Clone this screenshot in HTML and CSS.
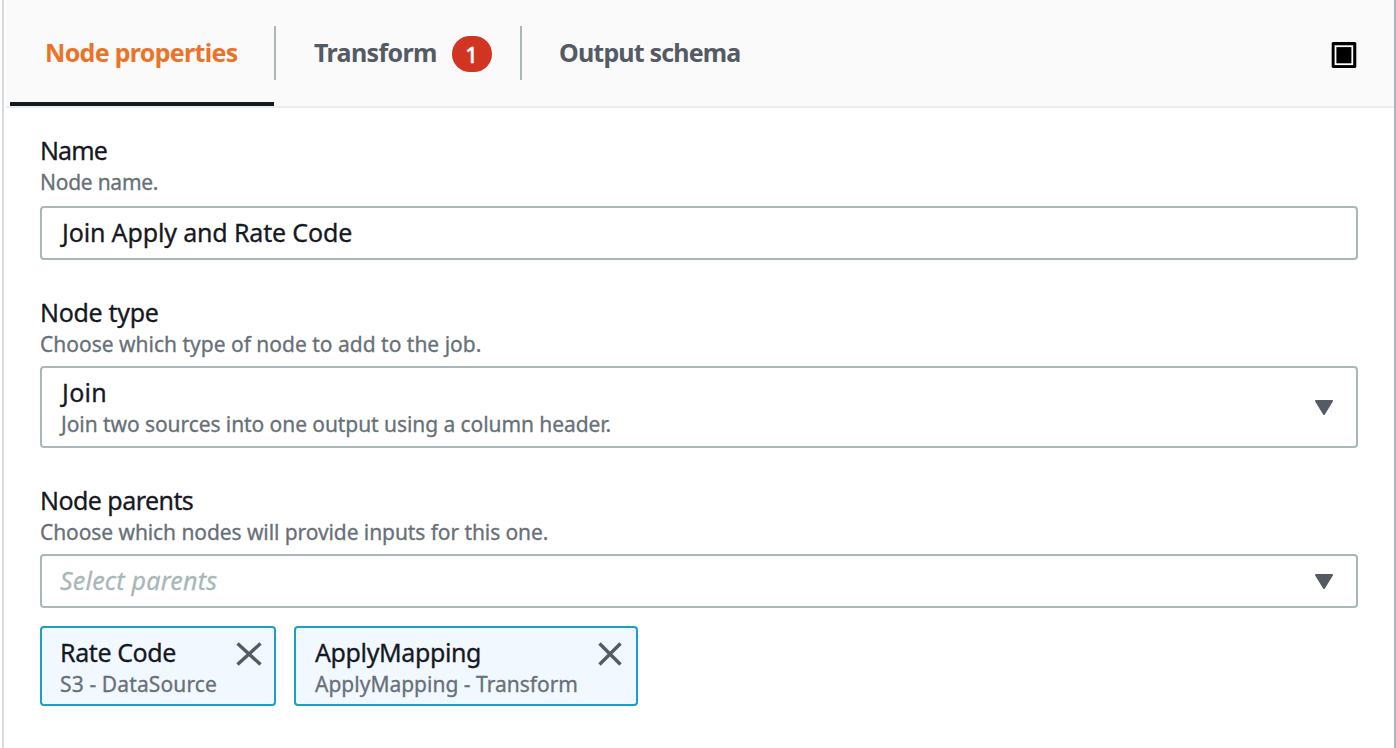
FILE: index.html
```html
<!DOCTYPE html>
<html lang="en">
<head>
<meta charset="utf-8">
<title>Node properties</title>
<link rel="stylesheet" href="styles.css">
</head>
<body>
<main class="panel">
  <header class="tabs">
    <div class="tab tab-active"><span class="t-props">Node properties</span></div>
    <div class="tab tab-transform"><span class="t-transform">Transform</span><span class="badge">1</span></div>
    <div class="tab tab-output"><span class="t-output">Output schema</span></div>
    <svg class="expand" width="26" height="28" viewBox="0 0 26 28"><rect x=".7" y="1" width="24.6" height="26" rx="1.5" fill="#000"/><rect x="4.5" y="5.2" width="16.8" height="18" fill="none" stroke="#fff" stroke-width="1.8"/></svg>
  </header>
  <section class="form">
    <div class="field">
      <div class="label"><span class="t-name">Name</span></div>
      <div class="hint"><span class="t-nodename">Node name.</span></div>
      <div class="control"><span class="t-join-apply">Join Apply and Rate Code</span></div>
    </div>
    <div class="field">
      <div class="label"><span class="t-nodetype">Node type</span></div>
      <div class="hint"><span class="t-choose-type">Choose which type of node to add to the job.</span></div>
      <div class="control control-tall">
        <div>
          <div class="option"><span class="t-join">Join</span></div>
          <div class="option-hint"><span class="t-join-two">Join two sources into one output using a column header.</span></div>
        </div>
        <svg class="caret" width="20" height="18" viewBox="0 0 20 18"><path d="M2 3h16L10 16z"/></svg>
      </div>
    </div>
    <div class="field">
      <div class="label"><span class="t-parents">Node parents</span></div>
      <div class="hint"><span class="t-choose-nodes">Choose which nodes will provide inputs for this one.</span></div>
      <div class="control control-parents"><span class="placeholder t-select">Select parents</span>
        <svg class="caret" width="20" height="18" viewBox="0 0 20 18"><path d="M2 3h16L10 16z"/></svg>
      </div>
    </div>
    <div class="tokens">
      <div class="token token-rate">
        <div>
          <div class="option"><span class="t-rate">Rate Code</span></div>
          <div class="option-hint"><span class="t-s3">S3 - DataSource</span></div>
        </div>
        <svg class="close" width="26" height="24" viewBox="0 0 26 24"><path d="M1.5 1.5l23 21M24.5 1.5l-23 21"/></svg>
      </div>
      <div class="token token-apply">
        <div>
          <div class="option"><span class="t-apply">ApplyMapping</span></div>
          <div class="option-hint"><span class="t-apply-tr">ApplyMapping - Transform</span></div>
        </div>
        <svg class="close" width="24" height="24" viewBox="0 0 24 24"><path d="M1.5 1.5l21 21M22.5 1.5l-21 21"/></svg>
      </div>
    </div>
  </section>
</main>
</body>
</html>
```
FILE: styles.css
```css
* { box-sizing: border-box; }
body { margin: 0; background: #fff; font-family: "Noto Sans", "Open Sans", sans-serif; color: #16191f; overflow: hidden; }
span { white-space: nowrap; }
.panel { height: 748px; margin-left: 2px; border-left: 2px solid #d5dbdb; border-right: 2px solid #aab7b8; padding-left: 2px; }
.tabs { display: flex; height: 108px; background: #fafafa; border-bottom: 2px solid #eaeded; padding-left: 4px; font-size: 25px; font-weight: 700; line-height: 34px; color: #545b64; }
.tab { position: relative; display: flex; height: 106px; padding-top: 35px; }
.tab-active { width: 264px; padding-left: 35px; border-bottom: 4px solid #16191f; color: #eb7329; }
.tab-transform { width: 247px; padding-left: 40px; }
.tab-output { padding-left: 38px; }
.tab-transform::before, .tab-output::before { content: ""; position: absolute; left: 0; top: 26px; width: 2px; height: 54px; background: #aab7b8; }
.tab-output::before { left: -1px; }
.badge { width: 40px; height: 36px; border-radius: 18px; background: #d13420; color: #fff; font-size: 22px; line-height: 36px; font-weight: 500; text-align: center; margin: 1px 0 0 15px; -webkit-text-stroke: .4px; }
.expand { margin: 41px 37px 0 auto; }
.form { padding: 26px 36px 0 34px; -webkit-text-stroke: .3px; }
.field { margin-bottom: 36px; }
.label, .option { font-size: 25px; line-height: 32px; padding-bottom: 2px; }
.hint, .option-hint { font-size: 21px; line-height: 28px; color: #687078; }
.control { display: flex; align-items: center; justify-content: space-between; margin-top: 10px; height: 54px; border: 2px solid #aab7b8; border-radius: 4px; padding: 0 22px 0 18px; font-size: 25px; }
.control > span { margin-top: -2px; }
.control-tall { height: 82px; margin-top: 8px; }
.control-parents { margin-top: 8px; }
.placeholder { font-style: italic; color: #aab7b8; }
.caret { fill: #545b64; stroke: #545b64; stroke-width: 2; stroke-linejoin: round; }
.tokens { display: flex; gap: 18px; margin-top: -18px; }
.token { display: flex; justify-content: space-between; height: 80px; border: 2px solid #1b9fc4; border-radius: 4px; background: #f1f8ff; padding: 8px 12px 0 18px; }
.token-rate { width: 236px; }
.token-apply { width: 344px; padding: 8px 14px 0 19px; }
.close { margin-top: 6px; fill: none; stroke: #545b64; stroke-width: 3.4; }

/* Per-string tracking */
.t-props { letter-spacing: -.7px; }
.t-transform { letter-spacing: -.65px; }
.t-output { letter-spacing: -.83px; }
.t-name { letter-spacing: -.9px; }
.t-nodename { letter-spacing: -.25px; }
.t-join-apply { letter-spacing: -.15px; padding-left: 2px; }
.t-nodetype { letter-spacing: -.3px; }
.t-join { letter-spacing: .3px; padding-left: 2px; }
.t-join-two { letter-spacing: -.07px; padding-left: 1px; }
.t-parents { letter-spacing: -.55px; }
.t-choose-nodes { letter-spacing: -.08px; }
.t-select { letter-spacing: .2px; }
.t-rate { letter-spacing: -.4px; }
.t-s3 { letter-spacing: .13px; }
.t-apply { letter-spacing: -.38px; }
```
